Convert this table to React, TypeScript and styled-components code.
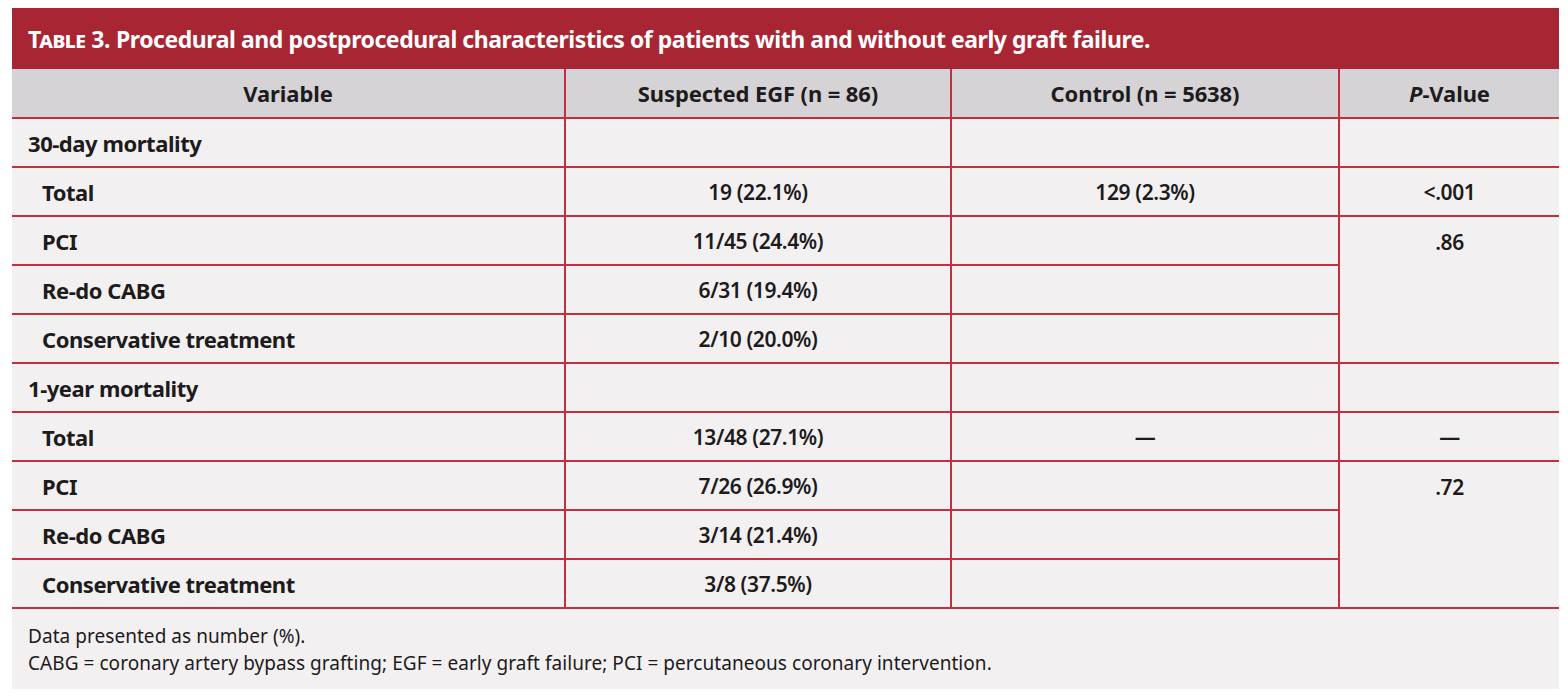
import styled, { createGlobalStyle } from "styled-components";

const GlobalStyle = createGlobalStyle`
  html, body {
    margin: 0;
    padding: 0;
    background: #ffffff;
  }
`;

type Row = {
  label: string;
  section?: boolean;
  egf?: string;
  control?: string;
  p?: string;
  pSpan?: number;
  noP?: boolean;
};

const rows: Row[] = [
  { label: "30-day mortality", section: true, egf: "", control: "", p: "" },
  { label: "Total", egf: "19 (22.1%)", control: "129 (2.3%)", p: "<.001" },
  { label: "PCI", egf: "11/45 (24.4%)", control: "", p: ".86", pSpan: 3 },
  { label: "Re-do CABG", egf: "6/31 (19.4%)", control: "", noP: true },
  { label: "Conservative treatment", egf: "2/10 (20.0%)", control: "", noP: true },
  { label: "1-year mortality", section: true, egf: "", control: "", p: "" },
  { label: "Total", egf: "13/48 (27.1%)", control: "—", p: "—" },
  { label: "PCI", egf: "7/26 (26.9%)", control: "", p: ".72", pSpan: 3 },
  { label: "Re-do CABG", egf: "3/14 (21.4%)", control: "", noP: true },
  { label: "Conservative treatment", egf: "3/8 (37.5%)", control: "", noP: true },
];

export default function App() {
  return (
    <>
      <GlobalStyle />
      <Page>
        <Card>
          <TitleBar>
            <SmallCaps>Table 3.</SmallCaps> Procedural and postprocedural
            characteristics of patients with and without early graft failure.
          </TitleBar>
          <Grid>
            <colgroup>
              <col style={{ width: 553 }} />
              <col style={{ width: 386 }} />
              <col style={{ width: 388 }} />
              <col />
            </colgroup>
            <thead>
              <tr>
                <HeadCell>Variable</HeadCell>
                <HeadCell>Suspected EGF (n = 86)</HeadCell>
                <HeadCell>Control (n = 5638)</HeadCell>
                <HeadCell>
                  <i>P</i>-Value
                </HeadCell>
              </tr>
            </thead>
            <tbody>
              {rows.map((r, i) => (
                <tr key={i}>
                  <LabelCell $indent={!r.section}>{r.label}</LabelCell>
                  <DataCell>{r.egf}</DataCell>
                  <DataCell>{r.control}</DataCell>
                  {!r.noP && (
                    <DataCell rowSpan={r.pSpan} $top={!!r.pSpan}>
                      {r.p}
                    </DataCell>
                  )}
                </tr>
              ))}
            </tbody>
          </Grid>
          <Notes>
            <p>Data presented as number (%).</p>
            <p>
              CABG = coronary artery bypass grafting; EGF = early graft failure;
              PCI = percutaneous coronary intervention.
            </p>
          </Notes>
        </Card>
      </Page>
    </>
  );
}

const Page = styled.div`
  padding: 8px 9px 12px 12px;
  font-family: "Noto Sans", "Open Sans", sans-serif;
  color: #1d1b1c;
`;

const Card = styled.div`
  width: 1547px;
  background: #f2f0f1;
`;

const TitleBar = styled.div`
  height: 61px;
  box-sizing: border-box;
  background: #a82534;
  color: #ffffff;
  font-weight: 700;
  font-size: 23px;
  letter-spacing: -0.45px;
  padding: 0 16px;
  display: flex;
  align-items: center;
  gap: 6px;
  white-space: nowrap;
`;

const SmallCaps = styled.span`
  font-variant: small-caps;
`;

const Grid = styled.table`
  width: 100%;
  border-collapse: collapse;
  table-layout: fixed;

  td + td,
  th + th {
    border-left: 2px solid #c22f3e;
  }
`;

const HeadCell = styled.th`
  height: 48px;
  background: #d5d3d6;
  font-size: 22px;
  font-weight: 700;
  letter-spacing: -0.1px;
  text-align: center;
  border-bottom: 2px solid #c22f3e;
  padding: 0;
`;

const LabelCell = styled.td<{ $indent: boolean }>`
  height: 47px;
  padding: 0 0 0 ${(p) => (p.$indent ? 30 : 16)}px;
  font-size: 22px;
  font-weight: 700;
  letter-spacing: -0.45px;
  border-bottom: 2px solid #c22f3e;
  white-space: nowrap;
`;

const DataCell = styled.td<{ $top?: boolean }>`
  height: 47px;
  padding: ${(p) => (p.$top ? "11px 0 0" : "0")};
  vertical-align: ${(p) => (p.$top ? "top" : "middle")};
  text-align: center;
  font-size: 21px;
  font-weight: 600;
  letter-spacing: -0.4px;
  border-bottom: 2px solid #c22f3e;
  border-left: 2px solid #c22f3e;
`;

const Notes = styled.div`
  padding: 14px 16px 12px;
  font-size: 19px;
  line-height: 27px;
  letter-spacing: 0.05px;

  p {
    margin: 0;
  }
`;
